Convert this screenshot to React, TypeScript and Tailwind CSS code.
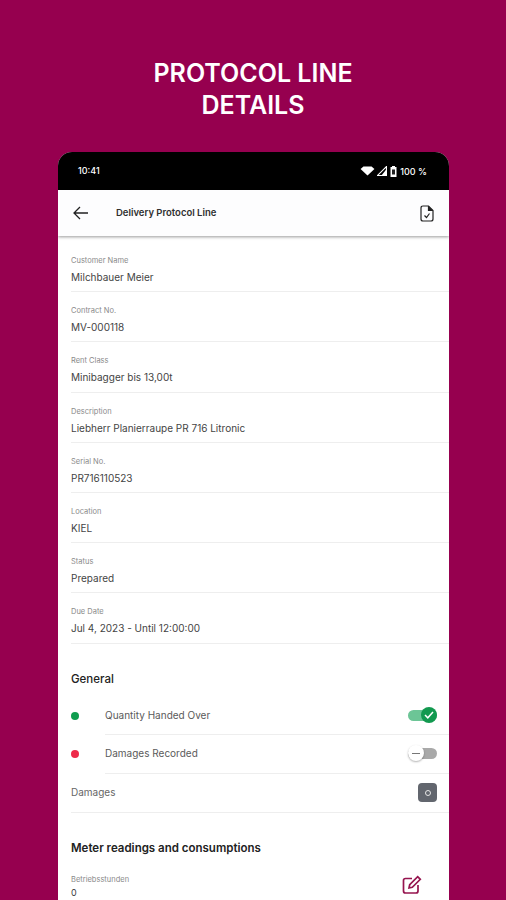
import React from 'react';

const FIELDS = [
  { label: 'Customer Name', value: 'Milchbauer Meier' },
  { label: 'Contract No.', value: 'MV-000118' },
  { label: 'Rent Class', value: 'Minibagger bis 13,00t' },
  { label: 'Description', value: 'Liebherr Planierraupe PR 716 Litronic' },
  { label: 'Serial No.', value: 'PR716110523' },
  { label: 'Location', value: 'KIEL' },
  { label: 'Status', value: 'Prepared' },
  { label: 'Due Date', value: 'Jul 4, 2023 - Until 12:00:00' },
];

const Field = ({ label, value }: { label: string; value: string }) => (
  <div className="h-[50.2px] flex flex-col border-b border-[#eeeeee] pt-[13px]">
    <span className="text-[7.5px] leading-[12px] text-[#8a8a8a]">{label}</span>
    <span className="mt-[3px] text-[10px] leading-[14px] text-[#444444]">{value}</span>
  </div>
);

const StatusIcons = () => (
  <div className="flex items-center gap-[2px]">
    <svg width="15" height="10" viewBox="0 0 13 10" preserveAspectRatio="none">
      <path d="M0.5 3 L3 0.5 H10 L12.5 3 L6.5 9.5 Z" fill="#fff" />
    </svg>
    <svg width="10" height="10" viewBox="0 0 9 9">
      <path d="M8.5 0.5 V8.5 H0.5 Z" fill="none" stroke="#fff" strokeWidth="1" />
      <path d="M8.5 3 V8.5 H4 Z" fill="#fff" />
    </svg>
    <svg width="7" height="11" viewBox="0 0 7 11" className="ml-[1px]">
      <path d="M2 0 H5 V1 H6.5 V11 H0.5 V1 H2 Z" fill="#fff" />
      <rect x="2" y="3.5" width="3" height="5" fill="#222" />
    </svg>
    <span className="ml-[1px] text-[9px] leading-none font-medium text-white">100 %</span>
  </div>
);

const App: React.FC = () => {
  return (
    <div className="h-[900px] w-[506px] overflow-hidden bg-[#96004f] font-['Inter',sans-serif]">
      <h1 className="pt-[57px] text-center text-[25px] leading-[32px] font-semibold text-white">
        PROTOCOL LINE
        <br />
        DETAILS
      </h1>

      <div className="mt-[31px] mr-[57px] ml-[58px] h-[748px] overflow-hidden rounded-t-[14px] bg-white">
        {/* Status bar */}
        <div className="flex h-[38px] items-center justify-between bg-black pr-[22px] pl-[20px]">
          <span className="text-[9px] font-medium text-white">10:41</span>
          <StatusIcons />
        </div>

        {/* App bar */}
        <div className="flex h-[46px] items-center bg-[#fdfdfe] pr-[15px] pl-[15px] shadow-[0_1px_3px_rgba(0,0,0,0.4)]">
          <svg width="15" height="14" viewBox="0 0 15 14" fill="none" stroke="#222" strokeWidth="1.3">
            <path d="M15 7 H1.5 M7 1 L1 7 L7 13" />
          </svg>
          <span className="ml-[28px] pt-px text-[9.5px] font-semibold text-[#2f2f2f]">Delivery Protocol Line</span>
          <svg className="ml-auto" width="14" height="17" viewBox="0 0 14 17" fill="none" stroke="#222" strokeWidth="1.2">
            <path d="M8.5 1 H3 Q1 1 1 3 V14 Q1 16 3 16 H11 Q13 16 13 14 V5.5 Z" />
            <path d="M8.5 1 V5.5 H13" fill="#222" />
            <path d="M4.5 10.5 L6.5 12.5 L9.5 8.5" />
          </svg>
        </div>

        <div className="pt-[6px] pl-[13px]">
          {FIELDS.map(f => (
            <Field key={f.label} label={f.label} value={f.value} />
          ))}

          <h2 className="mt-[27px] text-[11.5px] leading-[16px] font-medium text-[#222]">General</h2>

          <div className="mt-[10px] flex h-[38px] items-center">
            <span className="h-[8px] w-[8px] rounded-full bg-[#0f9d4f]" />
            <div className="ml-[26px] flex h-full flex-1 items-center border-b border-[#eeeeee] pr-[12px]">
              <span className="text-[10px] text-[#5a5a5a]">Quantity Handed Over</span>
              <div className="relative ml-auto h-[11px] w-[29px] rounded-full bg-[#6cc596]">
                <span className="absolute top-[-3px] right-0 flex h-[16px] w-[16px] items-center justify-center rounded-full bg-[#12994f]">
                  <svg width="10" height="8" viewBox="0 0 10 8" fill="none" stroke="#fff" strokeWidth="1.5">
                    <path d="M1 4 L3.8 6.8 L9 1" />
                  </svg>
                </span>
              </div>
            </div>
          </div>

          <div className="flex h-[39px] items-center">
            <span className="h-[8px] w-[8px] rounded-full bg-[#ee2a4a]" />
            <div className="ml-[26px] flex h-full flex-1 items-center border-b border-[#eeeeee] pr-[12px]">
              <span className="text-[10px] text-[#5a5a5a]">Damages Recorded</span>
              <div className="relative ml-auto h-[11px] w-[29px] rounded-full bg-[#a9a9a9]">
                <span className="absolute top-[-3px] left-0 flex h-[16px] w-[16px] items-center justify-center rounded-full bg-white shadow-[0_1px_2px_rgba(0,0,0,0.3)]">
                  <span className="h-px w-[8px] bg-[#777]" />
                </span>
              </div>
            </div>
          </div>

          <div className="flex h-[39px] items-center border-b border-[#eeeeee] pr-[12px]">
            <span className="text-[10px] text-[#666666]">Damages</span>
            <span className="ml-auto flex h-[19px] w-[19px] items-center justify-center rounded-[4px] bg-[#62666e]">
              <span className="h-[6px] w-[6px] rounded-full border-[1.5px] border-[#e6e6e6]" />
            </span>
          </div>

          <h2 className="mt-[27px] text-[11.5px] leading-[16px] font-semibold text-[#222]">
            Meter readings and consumptions
          </h2>

          <div className="mt-[18px] flex items-start pr-[27px]">
            <div className="flex flex-col">
              <span className="text-[7.5px] leading-[11px] text-[#8a8a8a]">Betriebsstunden</span>
              <span className="mt-[3px] text-[9px] leading-[10px] text-[#3a3a3a]">0</span>
            </div>
            <svg className="mt-[1px] ml-auto" width="20" height="20" viewBox="0 0 20 20" fill="none" stroke="#96154f" strokeWidth="1.7">
              <path d="M10 3.5 H3.5 Q1.5 3.5 1.5 5.5 V16 Q1.5 18 3.5 18 H14 Q16 18 16 16 V10" />
              <path d="M7 13 L7.7 9.7 L15.7 1.7 L18.3 4.3 L10.3 12.3 Z" />
            </svg>
          </div>
        </div>
      </div>
    </div>
  );
};

export default App;
